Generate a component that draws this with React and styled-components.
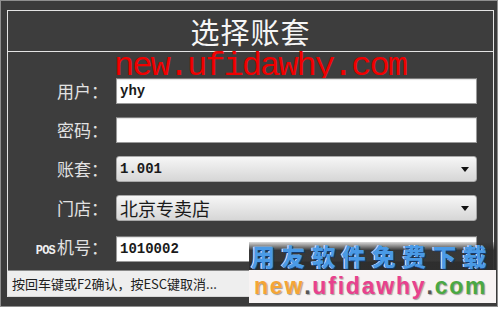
import React from "react";
import styled, { createGlobalStyle } from "styled-components";

const GlobalStyle = createGlobalStyle`
  html, body {
    margin: 0;
    padding: 0;
    background: #ffffff;
  }
  body {
    font-family: "Noto Sans CJK SC", "Noto Sans", sans-serif;
  }
`;

const fields = [
  { label: "用户：", kind: "input", value: "yhy" },
  { label: "密码：", kind: "input", value: "" },
  { label: "账套：", kind: "select", value: "1.001", mono: true },
  { label: "门店：", kind: "select", value: "北京专卖店" },
  { label: "机号：", prefix: "POS", kind: "input", value: "1010002" },
];

export default function App() {
  return (
    <>
      <GlobalStyle />
      <Window>
        <Frame>
          <TitleBar>选择账套</TitleBar>
          <Form>
            <RedMark>new.ufidawhy.com</RedMark>
            {fields.map((f) => (
              <Row key={f.label}>
                <Label>
                  {f.prefix && <LabelPrefix>{f.prefix}</LabelPrefix>}
                  {f.label}
                </Label>
                {f.kind === "input" ? (
                  <TextBox>{f.value}</TextBox>
                ) : (
                  <SelectBox>
                    <SelectValue $mono={f.mono}>{f.value}</SelectValue>
                    <Arrow />
                  </SelectBox>
                )}
              </Row>
            ))}
          </Form>
          <StatusBar>按回车键或F2确认，按ESC键取消...</StatusBar>
        </Frame>
        <Stamp>
          <StampTop>用友软件免费下载</StampTop>
          <StampBottom>
            <Orange>new</Orange>
            <Dot>.</Dot>
            <Pink>ufidawhy</Pink>
            <Dot>.</Dot>
            <Green>com</Green>
          </StampBottom>
        </Stamp>
      </Window>
    </>
  );
}

const Window = styled.div`
  position: relative;
  box-sizing: border-box;
  width: 498px;
  height: 307px;
  padding: 9px 4px 8px 6px;
  background: #3b3b3b;
  border: 1px solid #8e8e8e;
`;

const Frame = styled.div`
  box-sizing: border-box;
  width: 487px;
  display: flex;
  flex-direction: column;
  border: 1px solid #e4e4e4;
  border-bottom: none;
  background: #3d3d3d;
`;

const TitleBar = styled.div`
  height: 40px;
  border-bottom: 1px solid #e4e4e4;
  display: flex;
  align-items: center;
  justify-content: center;
  color: #f6f6f6;
  font-size: 29px;
  letter-spacing: 1px;
`;

const Form = styled.div`
  position: relative;
  display: flex;
  flex-direction: column;
  gap: 13px;
  padding: 26px 0 10px 0;
`;

const RedMark = styled.div`
  position: absolute;
  left: 106px;
  top: 4px;
  font-family: "Liberation Mono", monospace;
  font-size: 34px;
  letter-spacing: -2.15px;
  color: #f00000;
  line-height: 20px;
  white-space: nowrap;
`;

const Row = styled.div`
  display: grid;
  grid-template-columns: 100px 361px;
  column-gap: 8px;
  align-items: center;
  height: 26px;
`;

const Label = styled.div`
  text-align: right;
  color: #e2e2e2;
  font-size: 17px;
  line-height: 26px;
  white-space: nowrap;
`;

const LabelPrefix = styled.span`
  font-family: "Liberation Mono", monospace;
  font-weight: bold;
  font-size: 12px;
  letter-spacing: -0.8px;
  margin-right: 2px;
  color: #f0f0f0;
`;

const TextBox = styled.div`
  position: relative;
  box-sizing: border-box;
  height: 26px;
  background: #ffffff;
  border: 1px solid #9a9a9a;
  border-top-color: #7a7a7a;
  box-shadow: inset 0 1px 1px rgba(0, 0, 0, 0.12);
  padding: 0 3px;
  font-family: "Liberation Mono", monospace;
  font-weight: bold;
  font-size: 14px;
  line-height: 24px;
  color: #1a1a1a;
`;

const SelectBox = styled.div`
  position: relative;
  box-sizing: border-box;
  height: 26px;
  display: flex;
  align-items: center;
  justify-content: space-between;
  border: 1px solid #a8a8a8;
  border-radius: 3px;
  background: linear-gradient(#f6f6f6, #e6e6e6 50%, #d6d6d6);
  padding: 0 7px 0 3px;
`;

const SelectValue = styled.span`
  font-family: ${(p) =>
    p.$mono ? `"Liberation Mono", monospace` : `"Noto Sans CJK SC", sans-serif`};
  font-weight: ${(p) => (p.$mono ? "bold" : "normal")};
  font-size: ${(p) => (p.$mono ? "14px" : "18px")};
  color: #1a1a1a;
  line-height: 24px;
`;

const Arrow = styled.span`
  width: 0;
  height: 0;
  border-left: 4px solid transparent;
  border-right: 4px solid transparent;
  border-top: 5px solid #111;
`;

const StatusBar = styled.div`
  box-sizing: border-box;
  height: 27px;
  background: #eeeeee;
  border-top: 1px solid #8a8a8a;
  border-bottom: 1px solid #d8d8d8;
  padding-left: 4px;
  display: flex;
  align-items: center;
  font-size: 13px;
  color: #202020;
  white-space: nowrap;
`;

const Stamp = styled.div`
  position: absolute;
  left: 248px;
  top: 241px;
  width: 247px;
  display: flex;
  flex-direction: column;
`;

const StampTop = styled.div`
  height: 28px;
  padding-left: 2px;
  background: linear-gradient(rgba(60, 60, 60, 0.2), rgba(45, 45, 45, 0.95) 30%);
  font-family: "Noto Sans CJK SC", sans-serif;
  font-weight: 900;
  font-size: 24px;
  letter-spacing: 6.2px;
  line-height: 28px;
  color: #4a9ae6;
  text-shadow: 1px 1px 0 #143a6e, -1px 0 0 #d6ecff;
  white-space: nowrap;
`;

const StampBottom = styled.div`
  height: 33px;
  display: flex;
  align-items: center;
  padding-left: 5px;
  background: #f7f3f3;
  font-family: "Liberation Sans", Arial, sans-serif;
  font-weight: bold;
  font-size: 23px;
  letter-spacing: 1.8px;
  line-height: 33px;
  text-shadow: 1px 1px 1px rgba(0, 0, 0, 0.35);
`;

const Orange = styled.span`
  color: #f5a536;
`;

const Pink = styled.span`
  color: #e8418e;
`;

const Green = styled.span`
  color: #4aa843;
`;

const Dot = styled.span`
  color: #555;
`;
